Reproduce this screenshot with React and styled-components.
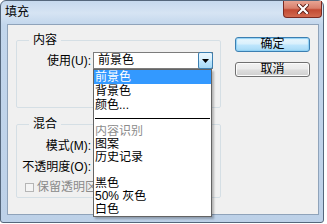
import React from "react";
import styled, { createGlobalStyle } from "styled-components";

const Global = createGlobalStyle`
  html, body { margin: 0; padding: 0; background: #ffffff; }
  body { font-family: "Liberation Sans", "Noto Sans CJK SC", sans-serif; font-size: 12px; color: #000; }
  * { box-sizing: border-box; }
`;

const Window = styled.div`
  position: relative;
  width: 324px;
  height: 223px;
  border: 1px solid #55677c;
  border-radius: 6px 6px 3px 3px;
  background: linear-gradient(180deg, #c6d9ee 0px, #d6e4f3 12px, #c2d6ec 24px, #bdd1e8 100%);
  display: flex;
  flex-direction: column;
`;

const TitleBar = styled.div`
  height: 23px;
  display: flex;
  align-items: flex-start;
  justify-content: space-between;
  padding-left: 4px;
`;

const Title = styled.span`
  line-height: 22px;
  font-size: 12px;
  color: #000;
`;

const CloseButton = styled.div`
  width: 39px;
  height: 17px;
  margin-right: 1px;
  border: 1px solid #7a2a22;
  border-top: none;
  border-radius: 0 0 4px 4px;
  background: linear-gradient(180deg, #e8a493 0%, #d9806c 45%, #c24a33 55%, #d26a4f 100%);
  display: flex;
  align-items: center;
  justify-content: center;
`;

const Client = styled.div`
  flex: 1;
  margin: 0 4px 7px 6px;
  background: #f0f0f0;
  border: 1px solid #8fa3ba;
  display: flex;
  padding: 0 8px;
  gap: 14px;
`;

const LeftCol = styled.div`
  width: 206px;
  display: flex;
  flex-direction: column;
`;

const Group = styled.fieldset`
  margin: ${(p) => p.$top}px 0 0 0;
  padding: ${(p) => p.$pt}px 0 ${(p) => p.$pb}px 0;
  border: 1px solid #d5dfe5;
  border-radius: 2px;
  min-width: 0;
`;

const Legend = styled.legend`
  margin-left: 12px;
  padding: 0 4px;
  line-height: 14px;
  font-size: 12px;
`;

const Row = styled.div`
  display: flex;
  align-items: center;
  height: ${(p) => p.$h || 21}px;
`;

const Label = styled.span`
  width: 76px;
  text-align: right;
  line-height: 14px;
  white-space: nowrap;
  padding-right: 2px;
`;

const SelectWrap = styled.div`
  position: relative;
  width: 120px;
  height: 17px;
  display: flex;
  background: #fff;
  border: 1px solid #7c7c7c;
`;

const SelectValue = styled.div`
  flex: 1;
  padding-left: 4px;
  line-height: 15px;
`;

const ArrowButton = styled.div`
  width: 15px;
  height: 17px;
  margin: -1px -1px 0 0;
  border: 1px solid #3c7fb1;
  border-radius: 2px;
  background: linear-gradient(180deg, #eaf6fd 0%, #d9f0fc 45%, #bee6fd 55%, #a7d9f5 100%);
  display: flex;
  align-items: center;
  justify-content: center;
`;

const List = styled.div`
  position: absolute;
  top: 16px;
  left: -1px;
  width: 119px;
  height: 148px;
  background: #fff;
  border: 1px solid #646464;
  box-shadow: 2px 2px 2px rgba(0, 0, 0, 0.25);
  z-index: 5;
`;

const Item = styled.div`
  height: ${(p) => p.$h || 13}px;
  line-height: ${(p) => p.$h || 13}px;
  padding-left: 1px;
  white-space: nowrap;
  overflow: hidden;
  background: ${(p) => (p.$selected ? "#3399ff" : "transparent")};
  color: ${(p) => (p.$selected ? "#fff" : p.$disabled ? "#8d8d8d" : "#000")};
`;

const Separator = styled.div`
  height: 13px;
  display: flex;
  align-items: center;
  padding: 0 1px;
  &::after {
    content: "";
    flex: 1;
    height: 1px;
    background: #000;
  }
`;

const CheckRow = styled.div`
  display: flex;
  align-items: center;
  height: 20px;
  padding-left: 8px;
  gap: 3px;
  color: #8a8a8a;
  white-space: nowrap;
  line-height: 14px;
`;

const CheckBox = styled.span`
  flex: none;
  width: 9px;
  height: 9px;
  border: 1px solid #b5b5b5;
  background: #f4f4f4;
`;

const RightCol = styled.div`
  display: flex;
  flex-direction: column;
  gap: 10px;
  padding-top: 12px;
`;

const Button = styled.div`
  width: 75px;
  height: 15px;
  border: 1px solid ${(p) => (p.$primary ? "#3c7fb1" : "#707070")};
  border-radius: 3px;
  background: ${(p) =>
    p.$primary
      ? "linear-gradient(180deg, #eaf6fd 0%, #d9f0fc 45%, #bee6fd 55%, #a7d9f5 100%)"
      : "linear-gradient(180deg, #f2f2f2 0%, #ebebeb 45%, #dddddd 55%, #cfcfcf 100%)"};
  box-shadow: ${(p) => (p.$primary ? "0 0 1px 1px #8fd1f5 inset" : "0 0 0 1px #fcfcfc inset")};
  display: flex;
  align-items: center;
  justify-content: center;
  line-height: 13px;
`;

const items = [
  { t: "前景色", h: 14, selected: true },
  { t: "背景色", h: 14 },
  { t: "颜色...", h: 14 },
  { sep: true },
  { t: "内容识别", disabled: true },
  { t: "图案" },
  { t: "历史记录" },
  { t: "" },
  { t: "黑色" },
  { t: "50% 灰色" },
  { t: "白色" },
];

export default function App() {
  return (
    <>
      <Global />
      <Window>
        <TitleBar>
          <Title>填充</Title>
          <CloseButton>
            <svg width="12" height="10" viewBox="0 0 12 10">
              <path d="M2 1 L10 9 M10 1 L2 9" stroke="#5a1a12" strokeWidth="4" strokeLinecap="square" />
              <path d="M2 1 L10 9 M10 1 L2 9" stroke="#ffffff" strokeWidth="2.2" strokeLinecap="square" />
            </svg>
          </CloseButton>
        </TitleBar>
        <Client>
          <LeftCol>
            <Group $top={8} $pt={5} $pb={38}>
              <Legend>内容</Legend>
              <Row $h={17}>
                <Label>使用(U):</Label>
                <SelectWrap>
                  <SelectValue>前景色</SelectValue>
                  <ArrowButton>
                    <svg width="7" height="4" viewBox="0 0 7 4">
                      <path d="M0 0 H7 L3.5 4 Z" fill="#000" />
                    </svg>
                  </ArrowButton>
                  <List>
                    {items.map((it, i) =>
                      it.sep ? (
                        <Separator key={i} />
                      ) : (
                        <Item key={i} $h={it.h} $selected={it.selected} $disabled={it.disabled}>
                          {it.t}
                        </Item>
                      )
                    )}
                  </List>
                </SelectWrap>
              </Row>
            </Group>
            <Group $top={9} $pt={4} $pb={0}>
              <Legend>混合</Legend>
              <Row>
                <Label>模式(M):</Label>
              </Row>
              <Row>
                <Label>不透明度(O):</Label>
              </Row>
              <CheckRow>
                <CheckBox />
                保留透明区域
              </CheckRow>
            </Group>
          </LeftCol>
          <RightCol>
            <Button $primary>确定</Button>
            <Button>取消</Button>
          </RightCol>
        </Client>
      </Window>
    </>
  );
}
